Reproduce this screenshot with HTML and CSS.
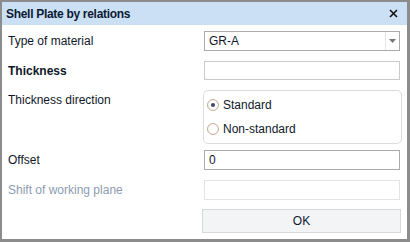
FILE: index.html
```html
<!DOCTYPE html>
<html lang="en">
<head>
	<meta charset="UTF-8">
	<title>Shell Plate by relations</title>
	<link rel="stylesheet" href="styles.css">
</head>
<body>
	<div class="dialog">
		<div class="dialog-header">
			<span class="dialog-title">Shell Plate by relations</span>
			<svg class="close" width="9" height="9" viewBox="0 0 9 9">
				<path d="M1 1 L8 8 M8 1 L1 8" stroke="#111" stroke-width="1.6"/>
			</svg>
		</div>
		<div class="dialog-body">
			<div class="row">
				<span class="label">Type of material</span>
				<div class="field select">
					<span class="value">GR-A</span>
					<span class="arrow"><svg width="7" height="4" viewBox="0 0 7 4"><path d="M0 0 H7 L3.5 4 Z" fill="#777"/></svg></span>
				</div>
			</div>
			<div class="row">
				<span class="label bold">Thickness</span>
				<div class="field light short"></div>
			</div>
			<div class="row top group-row">
				<span class="label pad-top">Thickness direction</span>
				<div class="group">
					<div class="radio-item">
						<span class="radio checked"></span>
						<span>Standard</span>
					</div>
					<div class="radio-item">
						<span class="radio"></span>
						<span>Non-standard</span>
					</div>
				</div>
			</div>
			<div class="row">
				<span class="label">Offset</span>
				<div class="field"><span class="value">0</span></div>
			</div>
			<div class="row">
				<span class="label disabled">Shift of working plane</span>
				<div class="field off"></div>
			</div>
			<div class="row button-row">
				<span class="label"></span>
				<div class="button">OK</div>
			</div>
		</div>
	</div>
</body>
</html>
```

FILE: styles.css
```css
* {
	box-sizing: border-box;
}
body {
	margin: 0;
	font-family: "Liberation Sans", Arial, sans-serif;
	font-size: 12px;
	color: #101828;
	background-color: white;
}
.dialog {
	width: 410px;
	height: 242px;
	border: solid #8c8c8c;
	border-width: 2px 3px 3px 2px;
	background-color: white;
	display: flex;
	flex-direction: column;
}
.dialog-header {
	height: 23px;
	background-color: #cce0f5;
	display: flex;
	align-items: center;
	justify-content: space-between;
	padding: 0 9px 0 4px;
}
.dialog-title {
	font-weight: bold;
	letter-spacing: -0.3px;
	color: #0b1a33;
}
.dialog-body {
	display: flex;
	flex-direction: column;
	gap: 10px;
	padding: 6px 7px 0 6px;
}
.row {
	display: flex;
	align-items: center;
	justify-content: space-between;
}
.row.top {
	align-items: flex-start;
}
.group-row {
	margin-bottom: -4px;
}
.button-row {
	margin-top: -1px;
}
.label.bold {
	font-weight: bold;
}
.label.pad-top {
	padding-top: 3px;
}
.label.disabled {
	color: #8d9cb0;
}
.field {
	width: 196px;
	height: 20px;
	border: 1px solid #ababab;
	display: flex;
	align-items: center;
	padding-left: 4px;
}
.field.short {
	height: 19px;
}
.field.light {
	border-color: #cacaca;
}
.field.off {
	border-color: #e3e3e3;
}
.select {
	justify-content: space-between;
}
.arrow {
	width: 14px;
	height: 18px;
	border-left: 1px solid #e6e6e6;
	display: flex;
	align-items: center;
	justify-content: center;
}
.group {
	width: 199px;
	height: 54px;
	margin-right: -2px;
	border: 1px solid #dcdcdc;
	border-radius: 5px;
	display: flex;
	flex-direction: column;
	justify-content: space-around;
	padding: 2px 0 2px 3px;
}
.radio-item {
	display: flex;
	align-items: center;
	gap: 4px;
}
.radio {
	width: 12px;
	height: 12px;
	border-radius: 50%;
	border: 1px solid #c9ad98;
	background: radial-gradient(circle, #ffffff 40%, #f1ece8 100%);
	display: flex;
	align-items: center;
	justify-content: center;
}
.radio.checked::after {
	content: "";
	width: 4px;
	height: 4px;
	border-radius: 50%;
	background-color: #3a4a66;
}
.button {
	width: 199px;
	height: 24px;
	margin-right: -1px;
	background-color: #f3f4f6;
	border: 1px solid #d8d8d8;
	display: flex;
	align-items: center;
	justify-content: center;
	color: #0b1a33;
}
```
